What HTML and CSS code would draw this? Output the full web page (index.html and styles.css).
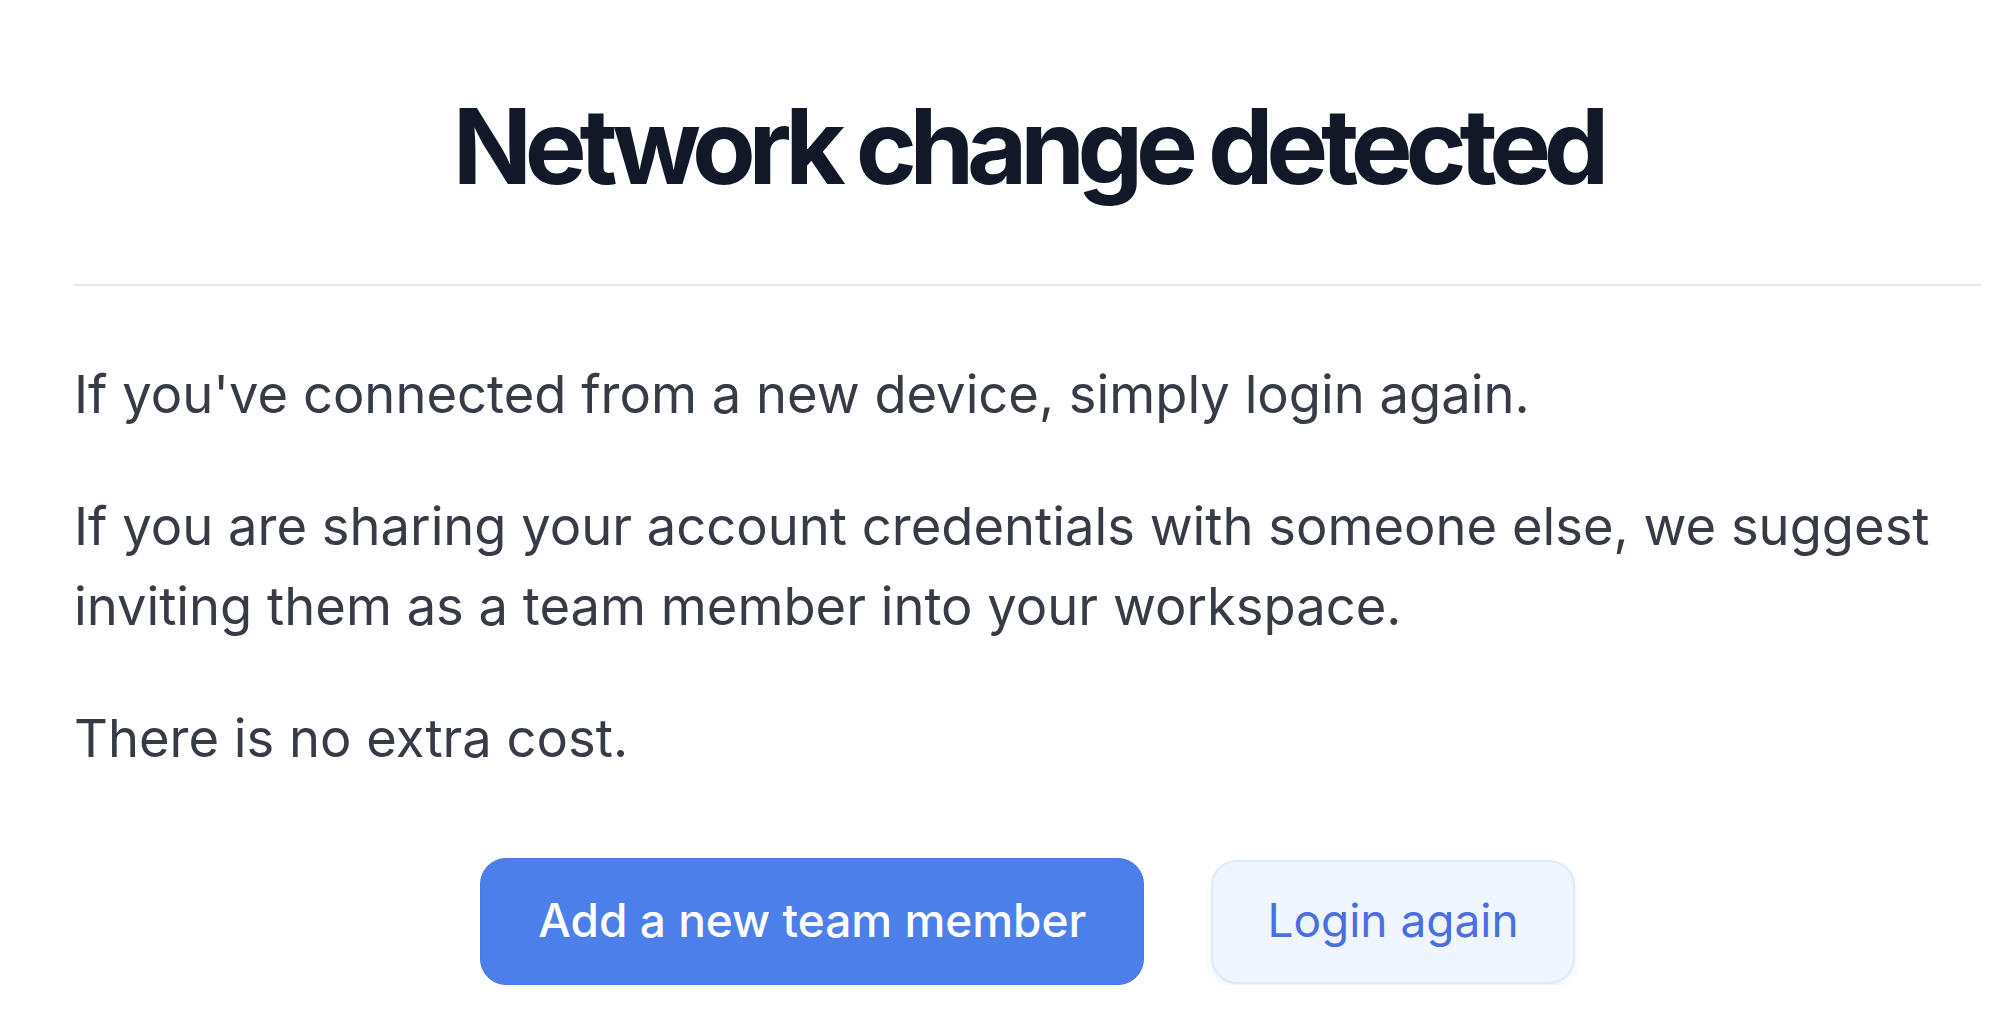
FILE: index.html
```html
<!DOCTYPE html>
<html lang="en">
<head>
    <meta charset="UTF-8">
    <meta name="viewport" content="width=device-width, initial-scale=1.0">
    <title>Network change detected</title>
    <link rel="stylesheet" href="styles.css">
</head>
<body>
    <div class="modal">
        <div class="modal-header">
            <h1>Network change detected</h1>
        </div>
        <div class="modal-body">
            <p>If you've connected from a new device, simply login again.</p>
            <p>If you are sharing your account credentials with someone else, we suggest inviting them as a team member into your workspace.</p>
            <p>There is no extra cost.</p>
        </div>
        <div class="modal-actions">
            <button type="button" class="btn btn-primary">Add a new team member</button>
            <button type="button" class="btn btn-secondary">Login again</button>
        </div>
    </div>
</body>
</html>
```

FILE: styles.css
```css
body {
    font-family: Inter, "Noto Sans", sans-serif;
    background-color: #ffffff;
    margin: 0;
}
.modal {
    padding: 0 11px 0 74px;
}
.modal-header {
    padding: 94px 0 86px;
    border-bottom: 2px solid #e5e7eb;
    text-align: center;
}
h1 {
    margin: 0;
    font-size: 104px;
    line-height: 1;
    font-weight: 700;
    letter-spacing: -0.07em;
    color: #111827;
}
.modal-body {
    padding-top: 68px;
}
.modal-body p {
    margin: 0 0 52px;
    font-size: 52.5px;
    line-height: 80px;
    color: #363b45;
}
.modal-body p:last-child {
    margin-bottom: 0;
}
.modal-actions {
    display: flex;
    justify-content: center;
    align-items: center;
    gap: 67px;
    margin-top: 80px;
}
.btn {
    font-family: Inter, "Noto Sans", sans-serif;
    font-size: 46px;
    font-weight: 500;
    line-height: 56px;
    border-radius: 26px;
    cursor: pointer;
}
.btn-primary {
    padding: 33px 57px 36px;
    background-color: #4d7fea;
    border: 1px solid #4a78e6;
    color: #ffffff;
}
.btn-secondary {
    padding: 30px 54px 34px;
    background-color: #eff6ff;
    border: 2px solid #dde8fd;
    color: #4b6fe2;
    font-weight: 400;
    box-shadow: 0 4px 8px rgba(30, 64, 175, 0.06);
}
```
